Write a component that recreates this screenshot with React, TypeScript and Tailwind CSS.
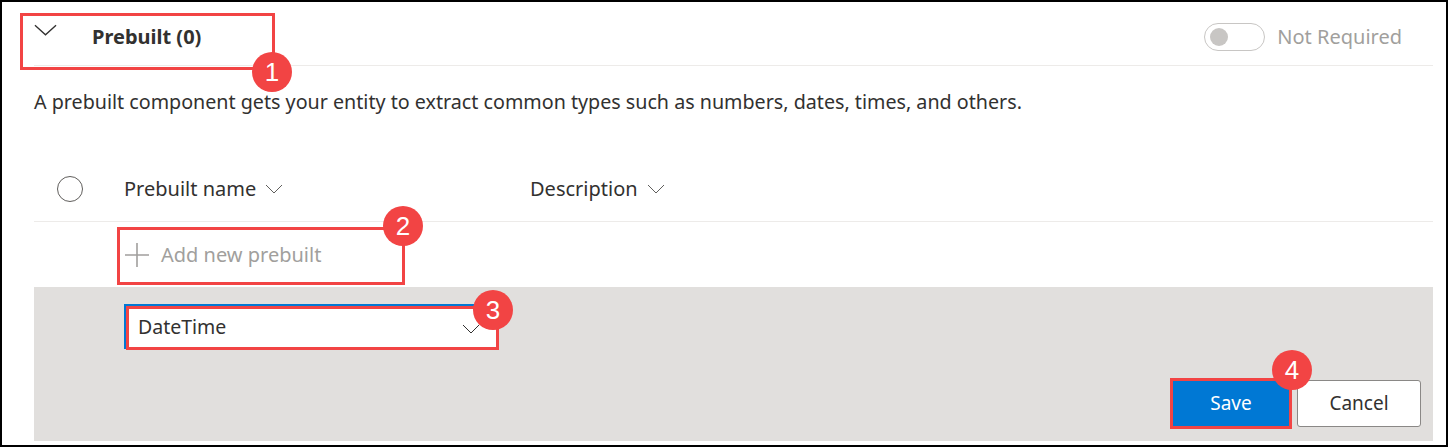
import React from "react";

const RED = "border-[#f24444]";

const Chevron = ({ className = "" }: { className?: string }) => (
  <svg className={className} viewBox="0 0 24 12" fill="none" stroke="currentColor" strokeWidth="1.4">
    <path d="M1 1 L12 11 L23 1" />
  </svg>
);

const SmallChevron = ({ className = "" }: { className?: string }) => (
  <svg className={`w-[18px] h-[10px] text-[#605e5c] ${className}`} viewBox="0 0 18 10" fill="none" stroke="currentColor" strokeWidth="1">
    <path d="M1 1 L9 9 L17 1" />
  </svg>
);

const Badge = ({ n, x, y }: { n: number; x: number; y: number }) => (
  <div
    className="absolute w-[40px] h-[40px] rounded-full bg-[#f24444] text-white flex items-center justify-center text-[26px] leading-none font-['Liberation_Sans',Arial,sans-serif]"
    style={{ left: x - 20, top: y - 20 }}
  >
    {n}
  </div>
);

const Callout = ({ x, y, w, h }: { x: number; y: number; w: number; h: number }) => (
  <div className={`absolute border-[3px] ${RED}`} style={{ left: x, top: y, width: w, height: h }} />
);

export default function App() {
  return (
    <div className="relative w-[1448px] h-[447px] bg-white border-2 border-black overflow-hidden font-['Noto_Sans',sans-serif] text-[#323130]">
      <div className="flex flex-col pl-[32px] pr-[13px]">
        {/* header */}
        <div className="flex items-center h-[64px] border-b border-[#edebe9]">
          <Chevron className="w-[23px] h-[12px] text-[#323130] -mt-[8px]" />
          <span className="ml-[35px] text-[20px] font-bold mt-[6px]">Prebuilt (0)</span>
          <div className="ml-auto mr-[31px] flex items-center gap-[12px] mt-[6px]">
            <div className="w-[61px] h-[28px] rounded-full border border-[#c8c6c4] flex items-center pl-[5px]">
              <div className="w-[18px] h-[18px] rounded-full bg-[#c8c6c4]" />
            </div>
            <span className="text-[20px] text-[#a19f9d]">Not Required</span>
          </div>
        </div>

        <p className="mt-[23px] text-[19.7px] leading-[26px]">
          A prebuilt component gets your entity to extract common types such as numbers, dates, times, and others.
        </p>

        {/* table header */}
        <div className="mt-[41px] flex items-center h-[66px] border-b border-[#edebe9]">
          <div className="ml-[23px] w-[26px] h-[26px] rounded-full border-[1.5px] border-[#605e5c]" />
          <div className="ml-[41px] w-[406px] flex items-center gap-[9px] text-[20px]">
            Prebuilt name <SmallChevron />
          </div>
          <div className="flex items-center gap-[9px] text-[20px]">
            Description <SmallChevron />
          </div>
        </div>

        {/* add row */}
        <div className="flex items-center h-[65px] pl-[91px] gap-[12px] text-[#a19f9d]">
          <svg className="w-[24px] h-[24px]" viewBox="0 0 24 24" fill="none" stroke="currentColor" strokeWidth="1.6">
            <path d="M12 0 V24 M0 12 H24" />
          </svg>
          <span className="text-[20px]">Add new prebuilt</span>
        </div>

        {/* edit panel */}
        <div className="bg-[#e1dfdd] h-[154px] flex flex-col pl-[90px] pr-[12px] pt-[17px]">
          <div className="w-[374px] h-[45px] bg-white border-2 border-[#0078d4] flex items-center pl-[12px] pr-[16px]">
            <span className="text-[19.5px]">DateTime</span>
            <SmallChevron className="ml-auto mt-[4px] text-[#323130]" />
          </div>
          <div className="mt-[29px] flex items-center justify-end gap-[5px]">
            <button className={`w-[122px] h-[51px] bg-[#0078d4] border-[3px] ${RED} text-white text-[19px]`}>Save</button>
            <button className="w-[124px] h-[47px] bg-white border border-[#8a8886] rounded-[3px] text-[19px]">
              Cancel
            </button>
          </div>
        </div>
      </div>

      {/* annotations */}
      <Callout x={18} y={11} w={255} h={57} />
      <Badge n={1} x={270} y={70} />
      <Callout x={115} y={225} w={288} h={58} />
      <Badge n={2} x={401} y={224} />
      <Callout x={124} y={304} w={373} h={44} />
      <Badge n={3} x={491} y={308} />
      <Badge n={4} x={1290} y={368} />
    </div>
  );
}
